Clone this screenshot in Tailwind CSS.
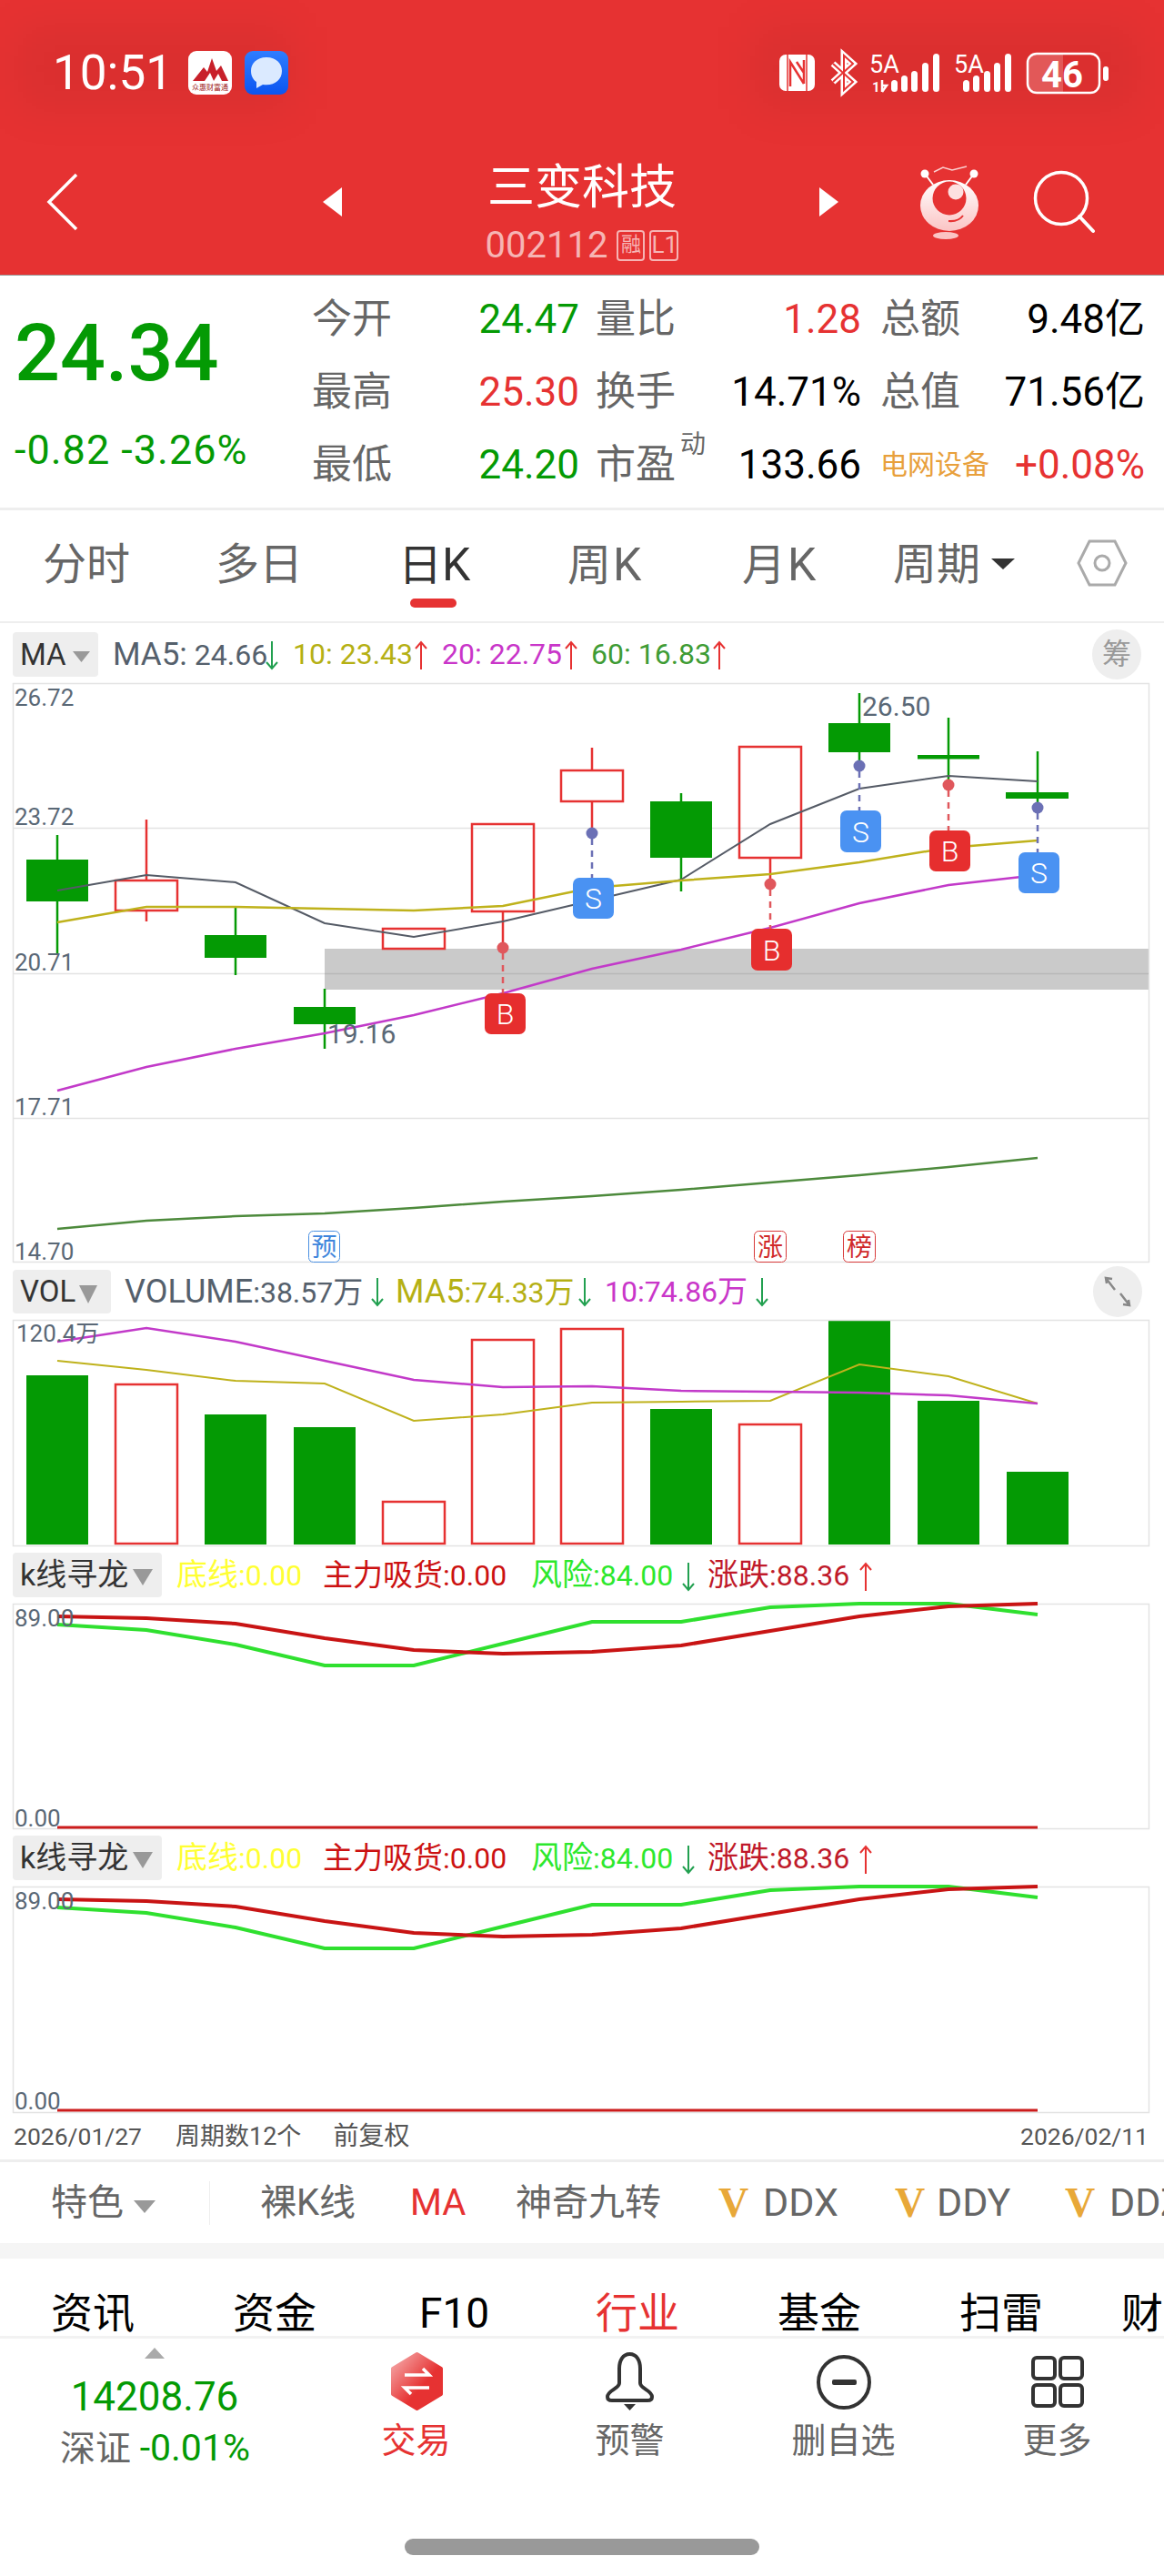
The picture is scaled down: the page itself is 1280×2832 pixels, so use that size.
<!DOCTYPE html>
<html lang="zh-CN">
<head>
  <meta charset="UTF-8">
  <title>三变科技</title>
  <script src="https://cdn.jsdelivr.net/npm/@tailwindcss/browser@4"></script>
</head>
<body class="bg-white w-[1280px] h-[2832px] overflow-hidden font-['Roboto','Noto_Sans_CJK_SC',sans-serif] text-[#666]">

  <!-- Red header -->
  <header class="relative h-[303px] bg-[#e63232] border-b border-[#999] overflow-hidden">
    <div class="absolute left-[20px] top-[30px] w-[300px] h-[90px] bg-black/5 blur-xl"></div>
    <div class="absolute left-[830px] top-[30px] w-[420px] h-[90px] bg-black/5 blur-xl"></div>
    <div class="relative flex items-center h-[160px] text-white">
      <span class="ml-[58px] w-[149px] text-[53px] leading-none">10:51</span>
      <svg width="48" height="48" viewBox="207 56 48 48">
        <rect x="207" y="56" width="48" height="48" rx="9" fill="#fff"/>
        <path d="M212 89 L224 74 L228 79 L233 64 L238 78 L243 72 L251 89 H244 L240 81 L235 89 L231 80 L225 89Z" fill="#c8202a"/>
        <text x="231" y="99" font-size="8" text-anchor="middle" fill="#a01820">众惠财富通</text>
      </svg>
      <svg class="ml-[14px]" width="48" height="48" viewBox="269 56 48 48">
        <defs><linearGradient id="chat" x1="0" y1="0" x2="0" y2="1"><stop offset="0" stop-color="#2f7dff"/><stop offset="1" stop-color="#0b55f0"/></linearGradient></defs>
        <rect x="269" y="56" width="48" height="48" rx="9" fill="url(#chat)"/>
        <path d="M293 63 C282 63 276 70 276 78 C276 84 279 88 282 90 L282 97 L289 93 C301 95 310 88 310 78 C310 70 304 63 293 63Z" fill="#dbeaff"/>
      </svg>
      <svg class="ml-auto mr-[55px]" width="375" height="60" viewBox="850 50 375 60">
        <rect x="857" y="60" width="39" height="40" rx="7" fill="#fff"/>
        <path d="M866 60 V100 M887 60 V100" stroke="#e63232" stroke-width="1.5"/>
        <path d="M869 95 V68 L884 92 M876 68 L884 80 M884 92 V66" fill="none" stroke="#e63232" stroke-width="2.5"/>
        <path d="M916 70 L938 90 L928 99 V61 L938 70 L916 90" fill="none" stroke="#fff" stroke-width="7"/>
        <path d="M916 70 L938 90 L928 99 V61 L938 70 L916 90" fill="none" stroke="#e63232" stroke-width="2"/>
        <text x="956" y="80" font-size="27" fill="#fff">5A</text>
        <text x="959" y="101" font-size="15" font-weight="700" fill="#fff">1</text>
        <path d="M970 88 V101 M970 101 L975 94 H970" fill="none" stroke="#fff" stroke-width="2.5"/>
        <g fill="#fff">
          <rect x="980" y="88" width="7" height="13" rx="3.5"/>
          <rect x="991" y="83" width="7" height="18" rx="3.5"/>
          <rect x="1002" y="78" width="7" height="23" rx="3.5"/>
          <rect x="1014" y="69" width="7" height="32" rx="3.5"/>
          <rect x="1026" y="59" width="7" height="42" rx="3.5"/>
          <rect x="1059" y="88" width="7" height="13" rx="3.5"/>
          <rect x="1070" y="83" width="7" height="18" rx="3.5"/>
          <rect x="1082" y="78" width="7" height="23" rx="3.5"/>
          <rect x="1093" y="69" width="7" height="32" rx="3.5"/>
          <rect x="1105" y="59" width="7" height="42" rx="3.5"/>
          <rect x="1213" y="73" width="6" height="16" rx="3"/>
        </g>
        <text x="1049" y="80" font-size="27" fill="#fff">5A</text>
        <path d="M1140 59 H1169 V102 H1140 A10 10 0 0 1 1130 92 V69 A10 10 0 0 1 1140 59Z" fill="#fff" fill-opacity="0.2"/>
        <rect x="1130" y="59" width="79" height="43" rx="10" fill="none" stroke="#fff" stroke-width="2.5"/>
        <text x="1168" y="96" font-size="40" font-weight="700" text-anchor="middle" fill="#fff">46</text>
      </svg>
    </div>
    <div class="relative flex items-start h-[142px]">
      <svg class="ml-[51px] mt-[30px]" width="35" height="64" viewBox="0 0 35 64"><path d="M33 2 L3 32 L33 62" fill="none" stroke="#fff" stroke-width="3.5"/></svg>
      <svg class="ml-[269px] mt-[46px]" width="21" height="32" viewBox="0 0 21 32"><path d="M21 0 V32 L0 16Z" fill="#fff"/></svg>
      <div class="w-[525px] pl-[3px] flex flex-col items-center">
        <div class="mt-[21px] text-[52px] leading-[52px] text-white">三变科技</div>
        <div class="mt-[20px] flex items-center text-[#f6b4b4]">
          <span class="text-[40px] leading-[34px]">002112</span>
          <span class="ml-[10px] w-[31px] h-[34px] border-2 border-[#f6b4b4] rounded-[4px] text-[22px] leading-[28px] text-center">融</span>
          <span class="ml-[5px] w-[32px] h-[34px] border-2 border-[#f6b4b4] rounded-[4px] text-[26px] leading-[29px] text-center">L1</span>
        </div>
      </div>
      <svg class="mt-[46px]" width="21" height="32" viewBox="0 0 21 32"><path d="M0 0 V32 L21 16Z" fill="#fff"/></svg>
      <svg class="ml-[83px] mt-[20px]" width="80" height="85" viewBox="1005 180 80 85">
        <defs><linearGradient id="bot" x1="0" y1="0" x2="0" y2="1"><stop offset="0" stop-color="#fff"/><stop offset="1" stop-color="#fbc4c4"/></linearGradient></defs>
        <path d="M1017 191 L1026 203 M1071 191 L1062 203" stroke="#fff" stroke-width="2"/>
        <circle cx="1017" cy="191" r="4.5" fill="#fff"/>
        <circle cx="1071" cy="191" r="4.5" fill="#fff"/>
        <path d="M1027 189 L1037 184 L1047 187 L1063 183" fill="none" stroke="#fbd0d0" stroke-width="1.5"/>
        <ellipse cx="1044" cy="226" rx="32" ry="28" fill="url(#bot)"/>
        <circle cx="1044" cy="218" r="18.5" fill="#e63232"/>
        <circle cx="1051" cy="211" r="8.5" fill="#fde0e0"/>
        <path d="M1043 243 Q1054 244 1059 237" fill="none" stroke="#e63232" stroke-width="2"/>
        <ellipse cx="1040" cy="259" rx="14" ry="4" fill="#fbc4c4"/>
      </svg>
      <svg class="ml-[45px] mt-[20px]" width="80" height="80" viewBox="1130 180 80 80">
        <circle cx="1167" cy="218" r="28.5" fill="none" stroke="#fff" stroke-width="3.5"/>
        <path d="M1187 238 L1202 254" stroke="#fff" stroke-width="4" stroke-linecap="round"/>
      </svg>
    </div>
  </header>

  <!-- Quote block -->
  <section class="flex h-[258px] border-b-[3px] border-[#eee]">
    <div class="w-[343px] pl-[16px] pt-[40px]">
      <div class="text-[88px] leading-[90px] font-medium text-[#049a04]">24.34</div>
      <div class="mt-[40px] text-[45px] leading-[44px] tracking-[1px] text-[#049a04] whitespace-nowrap">-0.82 -3.26%</div>
    </div>
    <div class="pt-[8px] grid grid-cols-[90px_204px_107px_203px_110px_202px] auto-rows-[80px] items-center text-[44px] leading-[48px] whitespace-nowrap">
      <span>今开</span><span class="text-right text-[#049a04]">24.47</span>
      <span class="pl-[18px]">量比</span><span class="text-right text-[#e63232]">1.28</span>
      <span class="pl-[21px]">总额</span><span class="text-right text-black">9.48亿</span>
      <span>最高</span><span class="text-right text-[#e63232]">25.30</span>
      <span class="pl-[18px]">换手</span><span class="text-right text-black">14.71%</span>
      <span class="pl-[21px]">总值</span><span class="text-right text-black">71.56亿</span>
      <span>最低</span><span class="text-right text-[#049a04]">24.20</span>
      <span class="pl-[18px] relative">市盈<span class="absolute left-[111px] top-[-22px] text-[28px]">动</span></span><span class="text-right text-black">133.66</span>
      <span class="pl-[21px] text-[30px] text-[#e8a03c]">电网设备</span><span class="text-right text-[#e63232]">+0.08%</span>
    </div>
  </section>

  <!-- Period tabs -->
  <nav class="flex items-start h-[124px] pt-[36px] border-b-2 border-[#eee] text-[48px] leading-[48px]">
    <span class="ml-[47px] w-[96px]">分时</span>
    <span class="ml-[94px] w-[96px]">多日</span>
    <span class="ml-[105px] w-[81px] relative text-[#333]">日<span class="text-[50px]">K</span><span class="absolute left-[13px] top-[61px] w-[51px] h-[10px] rounded-full bg-[#e63232]"></span></span>
    <span class="ml-[105px] w-[85px]">周<span class="text-[50px] ml-[2px]">K</span></span>
    <span class="ml-[107px] w-[84px]">月<span class="text-[50px] ml-[2px]">K</span></span>
    <span class="ml-[82px] w-[96px]">周期</span>
    <svg class="ml-[12px] mt-[17px]" width="26" height="12" viewBox="0 0 26 12"><path d="M0 0 H26 L13 12Z" fill="#333"/></svg>
    <svg class="ml-[68px] mt-[-4px]" width="56" height="52" viewBox="1184 595 56 52">
      <path d="M1198 597 H1226 L1238 621 L1226 645 H1198 L1186 621Z" fill="none" stroke="#aaa" stroke-width="3"/>
      <circle cx="1212" cy="621" r="8" fill="none" stroke="#aaa" stroke-width="3"/>
    </svg>
  </nav>

  <!-- MA legend -->
  <div class="relative flex items-start h-[66px] pt-[10px] text-[32px] leading-[49px] whitespace-nowrap">
    <div class="ml-[14px] w-[94px] h-[49px] bg-[#eee] rounded-[4px] flex items-center pl-[8px] text-[33px] text-[#333]">MA<svg class="ml-[7px] mt-[4px]" width="19" height="12" viewBox="0 0 19 12"><path d="M0 0 H19 L9.5 12Z" fill="#999"/></svg></div>
    <span class="ml-[16px] w-[164px] text-[#55606c]"><span class="text-[35px]">MA5:</span> 24.66</span>
    <svg class="mt-[9px] ml-[3px]" width="16" height="33" viewBox="0 0 16 33"><path d="M8 1 V31 M2 24 L8 31 L14 24" fill="none" stroke="#22a050" stroke-width="2"/></svg>
    <span class="ml-[15px] w-[131px] text-[#b5b014]">10: 23.43</span>
    <svg class="mt-[9px] ml-[2px]" width="16" height="33" viewBox="0 0 16 33"><path d="M8 32 V2 M2 9 L8 2 L14 9" fill="none" stroke="#e63232" stroke-width="2"/></svg>
    <span class="ml-[15px] w-[131px] text-[#c936c9]">20: 22.75</span>
    <svg class="mt-[9px] ml-[3px]" width="16" height="33" viewBox="0 0 16 33"><path d="M8 32 V2 M2 9 L8 2 L14 9" fill="none" stroke="#e63232" stroke-width="2"/></svg>
    <span class="ml-[14px] w-[131px] text-[#3f9c35]">60: 16.83</span>
    <svg class="mt-[9px] ml-[2px]" width="16" height="33" viewBox="0 0 16 33"><path d="M8 32 V2 M2 9 L8 2 L14 9" fill="none" stroke="#e63232" stroke-width="2"/></svg>
    <span class="absolute left-[1201px] top-[7px] w-[54px] h-[55px] rounded-full bg-[#eee] text-[#999] text-[32px] leading-[55px] text-center">筹</span>
  </div>

  <!-- Candlestick chart -->
  <svg class="block overflow-visible" width="1280" height="639" viewBox="0 751 1280 639">
    <rect x="357" y="1043" width="906" height="45" fill="#cacaca"/>
    <rect x="14.5" y="751.5" width="1249" height="636" fill="none" stroke="#e3e3e3" stroke-width="1.5"/>
    <path d="M14 910.5 H1263 M14 1070.5 H357 M14 1229.5 H1263" stroke="#e3e3e3" stroke-width="1.5"/>
    <path d="M357 1070.5 H1263" stroke="#b8b8b8" stroke-width="1.5"/>

    <g stroke="#049a04" stroke-width="2.5">
      <path d="M63 918 V1048 M259 998 V1072 M357 1087 V1153 M749 872 V980 M945 762 V842 M1043 789 V863 M1141 826 V888"/>
    </g>
    <g fill="#049a04">
      <rect x="29" y="945" width="68" height="46"/>
      <rect x="225" y="1028" width="68" height="25"/>
      <rect x="323" y="1107" width="68" height="19"/>
      <rect x="715" y="881" width="68" height="62"/>
      <rect x="911" y="795" width="68" height="32"/>
      <rect x="1009" y="830" width="68" height="4.5"/>
      <rect x="1106" y="871" width="69" height="7"/>
    </g>
    <g stroke="#e63232" stroke-width="2.5">
      <path d="M161 901 V968 M161 1001 V1013 M553 1002 V1042 M651 822 V847 M651 881 V916 M847 943 V972"/>
    </g>
    <g fill="none" stroke="#e63232" stroke-width="2.5">
      <rect x="127" y="968" width="68" height="33"/>
      <rect x="421" y="1021" width="68" height="22"/>
      <rect x="519" y="906" width="68" height="96"/>
      <rect x="617" y="847" width="68" height="34"/>
      <rect x="813" y="821" width="68" height="122"/>
    </g>

    <polyline points="63,979 161,962 259,970 357,1015 455,1030 553,1013 651,990 749,967 847,906 945,867 1043,853 1141,859" fill="none" stroke="#555b66" stroke-width="2"/>
    <polyline points="63,1014 161,997 259,997 357,999 455,1001 553,996 651,976 749,968 847,961 945,948 1043,932 1141,924" fill="none" stroke="#bfb21c" stroke-width="2.5"/>
    <polyline points="63,1199 161,1173 259,1153 357,1136 455,1116 553,1092 651,1065 749,1044 847,1020 945,993 1043,973 1141,962" fill="none" stroke="#c23ac9" stroke-width="2.5"/>
    <polyline points="63,1351 161,1342 259,1337 357,1334 455,1328 553,1321 651,1315 749,1308 847,1300 945,1292 1043,1283 1141,1273" fill="none" stroke="#4d8a3c" stroke-width="2.5"/>

    <g stroke-width="2.5" stroke-dasharray="7 6">
      <path d="M553 1048 V1092 M847 978 V1021 M1043 869 V913" stroke="#e0575c"/>
      <path d="M651 922 V965 M945 848 V891 M1141 894 V937" stroke="#6b70b5"/>
    </g>
    <g fill="#e0575c"><circle cx="553" cy="1042" r="6.5"/><circle cx="847" cy="972" r="6.5"/><circle cx="1043" cy="863" r="6.5"/></g>
    <g fill="#6b70b5"><circle cx="651" cy="916" r="6.5"/><circle cx="945" cy="842" r="6.5"/><circle cx="1141" cy="888" r="6.5"/></g>

    <g fill="#e62e2e">
      <rect x="533" y="1092" width="45" height="45" rx="7"/>
      <rect x="826" y="1021" width="45" height="46" rx="7"/>
      <rect x="1022" y="913" width="45" height="45" rx="7"/>
    </g>
    <g fill="#4a92f2">
      <rect x="630" y="965" width="45" height="45" rx="7"/>
      <rect x="924" y="891" width="45" height="46" rx="7"/>
      <rect x="1120" y="937" width="45" height="45" rx="7"/>
    </g>
    <g fill="#fff" font-size="32" text-anchor="middle" font-weight="300">
      <text x="555.5" y="1126">B</text><text x="848.5" y="1056">B</text><text x="1044.5" y="947">B</text>
      <text x="652.5" y="999">S</text><text x="946.5" y="926">S</text><text x="1142.5" y="971">S</text>
    </g>

    <g fill="#5a6876" font-size="26">
      <text x="16" y="776">26.72</text>
      <text x="16" y="907">23.72</text>
      <text x="16" y="1067">20.71</text>
      <text x="16" y="1226">17.71</text>
      <text x="16" y="1385">14.70</text>
    </g>
    <g fill="#5a6876" font-size="30">
      <text x="948" y="787">26.50</text>
      <text x="360" y="1147">19.16</text>
    </g>

    <rect x="339.5" y="1353.5" width="34" height="34" rx="5" fill="#fff" stroke="#4a90e2"/>
    <text x="356.5" y="1381" font-size="28" text-anchor="middle" fill="#3f86dc">预</text>
    <rect x="829.5" y="1353.5" width="35" height="34" rx="5" fill="#fff" stroke="#d83a3a"/>
    <text x="847" y="1381" font-size="28" text-anchor="middle" fill="#d02a2a">涨</text>
    <rect x="927.5" y="1353.5" width="35" height="34" rx="5" fill="#fff" stroke="#d83a3a"/>
    <text x="945" y="1381" font-size="28" text-anchor="middle" fill="#d02a2a">榜</text>
  </svg>

  <!-- VOL legend -->
  <div class="relative flex items-start h-[61px] pt-[6px] text-[32px] leading-[48px] whitespace-nowrap">
    <div class="ml-[14px] w-[108px] h-[48px] bg-[#eee] rounded-[4px] flex items-center pl-[8px] text-[33px] text-[#333]">VOL<svg class="ml-[4px] mt-[6px]" width="20" height="20" viewBox="0 0 20 20"><path d="M0 0 H20 L10 20Z" fill="#999"/></svg></div>
    <span class="ml-[15px] w-[267px] text-[#55606c]"><span class="text-[36px]">VOLUME</span>:38.57<span class="text-[33px]">万</span></span>
    <svg class="mt-[8px] ml-[3px]" width="16" height="33" viewBox="0 0 16 33"><path d="M8 1 V31 M2 24 L8 31 L14 24" fill="none" stroke="#22a050" stroke-width="2"/></svg>
    <span class="ml-[12px] w-[198px] text-[#b5b014]"><span class="text-[36px]">MA5</span>:74.33<span class="text-[33px]">万</span></span>
    <svg class="mt-[8px] ml-[2px]" width="16" height="33" viewBox="0 0 16 33"><path d="M8 1 V31 M2 24 L8 31 L14 24" fill="none" stroke="#22a050" stroke-width="2"/></svg>
    <span class="ml-[14px] w-[161px] text-[#c936c9]">10:74.86<span class="text-[33px]">万</span></span>
    <svg class="mt-[8px] ml-[4px]" width="16" height="33" viewBox="0 0 16 33"><path d="M8 1 V31 M2 24 L8 31 L14 24" fill="none" stroke="#22a050" stroke-width="2"/></svg>
    <svg class="absolute left-[1202px] top-[2px]" width="54" height="56" viewBox="0 0 54 56">
      <ellipse cx="27" cy="28" rx="27" ry="28" fill="#eee"/>
      <path d="M15 19 L14 13 L21 14 M14 13 L24 26 M39 37 L40 43 L33 42 M40 43 L30 30" fill="none" stroke="#888" stroke-width="2.5"/>
    </svg>
  </div>

  <!-- Volume bars -->
  <svg class="block overflow-visible" width="1280" height="250" viewBox="0 1451 1280 250">
    <g fill="#049a04">
      <rect x="29" y="1512" width="68" height="186"/>
      <rect x="225" y="1555" width="68" height="143"/>
      <rect x="323" y="1569" width="68" height="129"/>
      <rect x="715" y="1549" width="68" height="149"/>
      <rect x="911" y="1451" width="68" height="247"/>
      <rect x="1009" y="1540" width="68" height="158"/>
      <rect x="1107" y="1618" width="68" height="80"/>
    </g>
    <g fill="none" stroke="#e63232" stroke-width="2.5">
      <rect x="127" y="1522" width="68" height="175"/>
      <rect x="421" y="1651" width="68" height="46"/>
      <rect x="519" y="1473" width="68" height="224"/>
      <rect x="617" y="1461" width="68" height="236"/>
      <rect x="813" y="1566" width="68" height="131"/>
    </g>
    <rect x="14.5" y="1451.5" width="1249" height="248" fill="none" stroke="#e3e3e3" stroke-width="1.5"/>
    <polyline points="63,1496 161,1506 259,1518 357,1521 455,1562 553,1555 651,1542 749,1541 847,1540 945,1500 1043,1513 1141,1543" fill="none" stroke="#bfb21c" stroke-width="2"/>
    <polyline points="63,1475 161,1460 259,1475 357,1496 455,1517 553,1525 651,1524 749,1529 847,1530 945,1531 1043,1534 1141,1543" fill="none" stroke="#c23ac9" stroke-width="2.5"/>
    <text x="18" y="1475" font-size="26" fill="#5a6876">120.4万</text>
  </svg>

  <!-- k线寻龙 panel 1 -->
  <div class="flex items-start h-[62px] pt-[6px] text-[32px] leading-[49px] whitespace-nowrap">
    <div class="ml-[14px] w-[164px] h-[49px] bg-[#eee] rounded-[4px] flex items-center pl-[8px] text-[34px] text-[#333]">k线寻龙<svg class="ml-[5px] mt-[4px]" width="22" height="18" viewBox="0 0 22 18"><path d="M0 0 H22 L11 18Z" fill="#999"/></svg></div>
    <span class="ml-[16px] w-[146px] text-[#ffff33]"><span class="text-[34px]">底线</span>:0.00</span>
    <span class="ml-[15px] w-[212px] text-[#cc1111]"><span class="text-[33px]">主力吸货</span>:0.00</span>
    <span class="ml-[17px] w-[163px] text-[#2de82d]"><span class="text-[34px]">风险</span>:84.00</span>
    <svg class="mt-[10px] ml-[2px]" width="16" height="33" viewBox="0 0 16 33"><path d="M8 1 V31 M2 24 L8 31 L14 24" fill="none" stroke="#22a050" stroke-width="2"/></svg>
    <span class="ml-[13px] w-[165px] text-[#c01a2a]"><span class="text-[34px]">涨跌</span>:88.36</span>
    <svg class="mt-[10px] ml-[1px]" width="16" height="33" viewBox="0 0 16 33"><path d="M8 32 V2 M2 9 L8 2 L14 9" fill="none" stroke="#e63232" stroke-width="2"/></svg>
  </div>
  <svg class="block overflow-visible" width="1280" height="249" viewBox="0 1763 1280 249">
    <rect x="14.5" y="1763.5" width="1249" height="247" fill="none" stroke="#e3e3e3" stroke-width="1.5"/>
    <path d="M63 2009 H1141" stroke="#cc1c1c" stroke-width="3"/>
    <polyline points="63,1786 161,1792 259,1808 357,1831 455,1831 553,1807 651,1783 749,1783 847,1767 945,1763 1043,1763 1141,1775" fill="none" stroke="#2fe02f" stroke-width="4"/>
    <polyline points="63,1777 161,1779 259,1785 357,1801 455,1814 553,1818 651,1816 749,1809 847,1793 945,1777 1043,1766 1141,1763" fill="none" stroke="#c81414" stroke-width="4"/>
    <text x="16" y="1788" font-size="26" fill="#5a6876">89.00</text>
    <text x="16" y="2008" font-size="26" fill="#5a6876">0.00</text>
  </svg>

  <!-- k线寻龙 panel 2 -->
  <div class="flex items-start h-[62px] pt-[6px] text-[32px] leading-[49px] whitespace-nowrap">
    <div class="ml-[14px] w-[164px] h-[49px] bg-[#eee] rounded-[4px] flex items-center pl-[8px] text-[34px] text-[#333]">k线寻龙<svg class="ml-[5px] mt-[4px]" width="22" height="18" viewBox="0 0 22 18"><path d="M0 0 H22 L11 18Z" fill="#999"/></svg></div>
    <span class="ml-[16px] w-[146px] text-[#ffff33]"><span class="text-[34px]">底线</span>:0.00</span>
    <span class="ml-[15px] w-[212px] text-[#cc1111]"><span class="text-[33px]">主力吸货</span>:0.00</span>
    <span class="ml-[17px] w-[163px] text-[#2de82d]"><span class="text-[34px]">风险</span>:84.00</span>
    <svg class="mt-[10px] ml-[2px]" width="16" height="33" viewBox="0 0 16 33"><path d="M8 1 V31 M2 24 L8 31 L14 24" fill="none" stroke="#22a050" stroke-width="2"/></svg>
    <span class="ml-[13px] w-[165px] text-[#c01a2a]"><span class="text-[34px]">涨跌</span>:88.36</span>
    <svg class="mt-[10px] ml-[1px]" width="16" height="33" viewBox="0 0 16 33"><path d="M8 32 V2 M2 9 L8 2 L14 9" fill="none" stroke="#e63232" stroke-width="2"/></svg>
  </div>
  <svg class="block overflow-visible" width="1280" height="250" viewBox="0 1763 1280 250">
    <rect x="14.5" y="1763.5" width="1249" height="248" fill="none" stroke="#e3e3e3" stroke-width="1.5"/>
    <path d="M63 2009 H1141" stroke="#cc1c1c" stroke-width="3"/>
    <polyline points="63,1786 161,1792 259,1808 357,1831 455,1831 553,1807 651,1783 749,1783 847,1767 945,1763 1043,1763 1141,1775" fill="none" stroke="#2fe02f" stroke-width="4"/>
    <polyline points="63,1777 161,1779 259,1785 357,1801 455,1814 553,1818 651,1816 749,1809 847,1793 945,1777 1043,1766 1141,1763" fill="none" stroke="#c81414" stroke-width="4"/>
    <text x="16" y="1788" font-size="26" fill="#5a6876">89.00</text>
    <text x="16" y="2008" font-size="26" fill="#5a6876">0.00</text>
  </svg>

  <!-- Date row -->
  <div class="flex items-center h-[50px] pl-[15px] pr-[17px] text-[26.5px] text-[#555]">
    <span>2026/01/27</span>
    <span class="ml-[37px] text-[27px]">周期数12个</span>
    <span class="ml-[35px] text-[28px]">前复权</span>
    <span class="ml-auto">2026/02/11</span>
  </div>

  <!-- Feature row -->
  <div class="flex items-center h-[92px] border-t-[3px] border-[#eee] text-[40px] whitespace-nowrap overflow-hidden">
    <span class="ml-[56px] w-[80px] shrink-0">特色</span>
    <svg class="ml-[11px] mt-[8px] shrink-0" width="24" height="14" viewBox="0 0 24 14"><path d="M0 0 H24 L12 14Z" fill="#999"/></svg>
    <span class="ml-[59px] h-[48px] border-l border-[#eee] shrink-0"></span>
    <span class="ml-[55px] w-[110px] shrink-0">裸K线</span>
    <span class="ml-[55px] w-[62px] shrink-0 text-[#e63232]">MA</span>
    <span class="ml-[54px] w-[160px] shrink-0">神奇九转</span>
    <span class="ml-[63px] w-[33px] shrink-0 font-['Liberation_Serif',serif] font-bold text-[46px] text-[#e8a838]">V</span>
    <span class="ml-[16px] w-[82px] shrink-0 text-[43px]">DDX</span>
    <span class="ml-[63px] w-[32px] shrink-0 font-['Liberation_Serif',serif] font-bold text-[46px] text-[#e8a838]">V</span>
    <span class="ml-[14px] w-[80px] shrink-0 text-[43px]">DDY</span>
    <span class="ml-[61px] w-[33px] shrink-0 font-['Liberation_Serif',serif] font-bold text-[46px] text-[#e8a838]">V</span>
    <span class="ml-[16px] shrink-0 text-[43px]">DDZ</span>
  </div>
  <div class="h-[17px] bg-[#f5f5f5]"></div>

  <!-- Info tabs -->
  <div class="flex items-start h-[85px] pt-[38px] text-[46px] leading-[44px] text-black whitespace-nowrap overflow-hidden">
    <span class="ml-[56px] w-[200px] shrink-0">资讯</span>
    <span class="w-[205px] shrink-0">资金</span>
    <span class="w-[194px] shrink-0">F10</span>
    <span class="w-[200px] shrink-0 text-[#e63232]">行业</span>
    <span class="w-[200px] shrink-0">基金</span>
    <span class="w-[178px] shrink-0">扫雷</span>
    <span class="shrink-0">财务</span>
  </div>

  <!-- Bottom bar -->
  <footer class="h-[261px] border-t-[3px] border-[#f2f2f2]">
    <div class="flex h-[220px]">
      <div class="w-[340px] flex flex-col items-center">
        <svg class="mt-[10px]" width="22" height="12" viewBox="0 0 22 12"><path d="M11 0 L22 12 H0Z" fill="#aaa"/></svg>
        <div class="mt-[20px] text-[44px] leading-[44px] text-[#049a04]">14208.76</div>
        <div class="mt-[12px] text-[39px] leading-[44px] pl-[1px]">深证 <span class="text-[#049a04] text-[41px]">-0.01%</span></div>
      </div>
      <div class="w-[235px] flex flex-col items-center pt-[14px]">
        <svg width="64" height="66" viewBox="425 2587 64 66">
          <defs><linearGradient id="trade" x1="0" y1="0" x2="1" y2="1"><stop offset="0" stop-color="#f6b0b0"/><stop offset="0.6" stop-color="#e63232"/></linearGradient></defs>
          <path d="M457.5 2590 L484 2606 V2634 L457.5 2650 L431 2634 V2606Z" fill="url(#trade)" stroke="url(#trade)" stroke-width="4" stroke-linejoin="round"/>
          <path d="M444 2613 H471 L464 2606 M471 2627 H444 L451 2634" fill="none" stroke="#fff" stroke-width="3.5"/>
        </svg>
        <span class="mt-[13px] text-[38px] leading-[38px] text-[#e63232]">交易</span>
      </div>
      <div class="w-[235px] flex flex-col items-center pt-[14px]">
        <svg width="64" height="66" viewBox="660 2587 64 66">
          <path d="M691.5 2590 C684 2590 680 2597 680 2606 V2622 C680 2628 667 2630 667 2637 C667 2640 669 2641 672 2641 H711 C714 2641 716 2640 716 2637 C716 2630 703 2628 703 2622 V2606 C703 2597 699 2590 691.5 2590Z" fill="none" stroke="#333" stroke-width="4"/>
          <path d="M685 2645 H698 L691.5 2652Z" fill="#333"/>
        </svg>
        <span class="mt-[13px] text-[38px] leading-[38px]">预警</span>
      </div>
      <div class="w-[235px] flex flex-col items-center pt-[14px]">
        <svg width="64" height="66" viewBox="895 2587 64 66">
          <circle cx="927" cy="2621" r="28" fill="none" stroke="#333" stroke-width="4"/>
          <rect x="914" y="2618" width="27" height="6" rx="2" fill="#333"/>
        </svg>
        <span class="mt-[13px] text-[38px] leading-[38px]">删自选</span>
      </div>
      <div class="w-[235px] flex flex-col items-center pt-[14px]">
        <svg width="64" height="66" viewBox="1130 2587 64 66">
          <g fill="none" stroke="#333" stroke-width="4">
            <rect x="1135" y="2594" width="24" height="23" rx="4"/>
            <rect x="1165" y="2594" width="24" height="23" rx="4"/>
            <rect x="1135" y="2624" width="24" height="23" rx="4"/>
            <rect x="1165" y="2624" width="24" height="23" rx="4"/>
          </g>
        </svg>
        <span class="mt-[13px] text-[38px] leading-[38px]">更多</span>
      </div>
    </div>
    <div class="mx-auto w-[390px] h-[18px] rounded-full bg-[#999]"></div>
  </footer>
</body>
</html>
